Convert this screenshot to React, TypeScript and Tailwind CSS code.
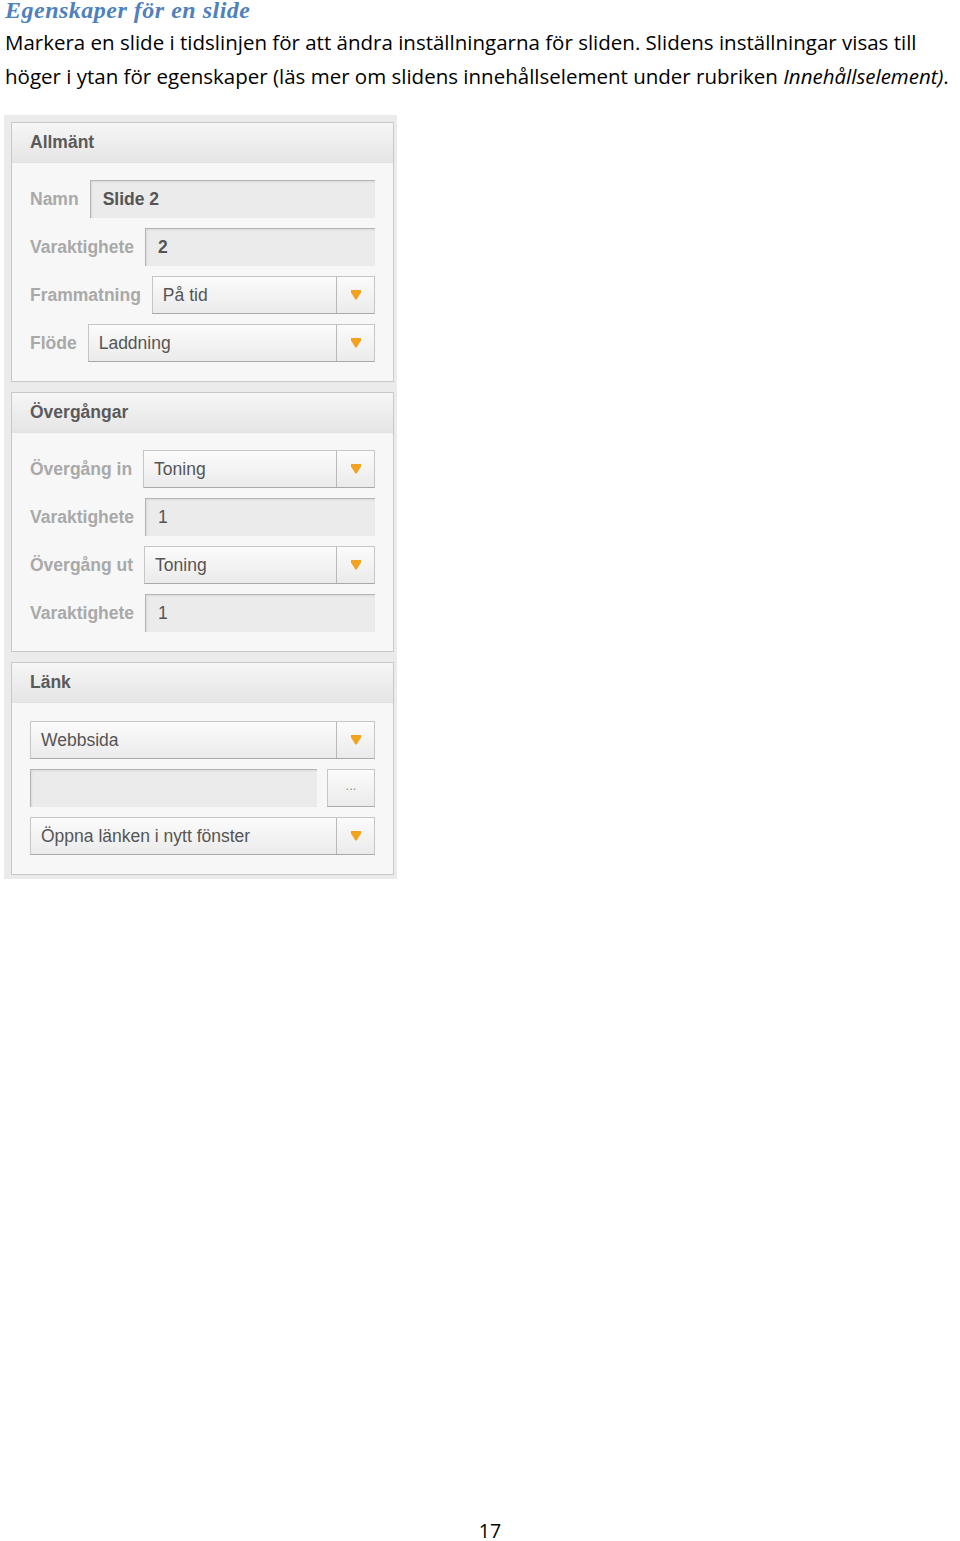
import React from 'react';

const Arrow: React.FC = () => (
  <svg width="10" height="10" viewBox="0 0 10 10">
    <polygon points="0,0 10,0 10,2.5 5.6,9.5 4.4,9.5 0,2.5" fill="#f2a21f" />
  </svg>
);

const Label: React.FC<{ text: string }> = ({ text }) => (
  <span className="shrink-0 whitespace-nowrap text-[17.5px] font-bold text-[#a9a9a9]">{text}</span>
);

const TextInput: React.FC<{ value?: string; bold?: boolean; className?: string }> = ({ value = '', bold, className = '' }) => (
  <div
    className={`flex h-[38px] items-center border-t border-l border-t-[#b4b4b4] border-l-[#b4b4b4] bg-[#ebebeb] pl-[12px] text-[17.5px] text-[#555] shadow-[inset_1px_1px_2px_rgba(0,0,0,0.08)] ${bold ? 'font-bold' : ''} ${className}`}
  >
    {value}
  </div>
);

const Select: React.FC<{ value: string; className?: string }> = ({ value, className = '' }) => (
  <div
    className={`flex h-[38px] items-stretch border border-[#c6c6c6] border-b-[#a9a9a9] bg-gradient-to-b from-[#fbfbfb] to-[#ebebeb] text-[17.5px] text-[#555] ${className}`}
  >
    <span className="flex flex-1 items-center whitespace-nowrap pl-[10px]">{value}</span>
    <span className="flex w-[38px] items-center justify-center border-l border-[#b9b9b9]">
      <Arrow />
    </span>
  </div>
);

const Section: React.FC<{ title: string; children: React.ReactNode }> = ({ title, children }) => (
  <div className="border border-[#c9c9c9] bg-[#f7f7f7]">
    <div className="flex h-[40px] items-center border-b border-[#e2e2e2] bg-gradient-to-b from-[#f6f6f6] to-[#e5e5e5] pl-[18px] text-[17.5px] font-bold text-[#5a5a5a]">
      {title}
    </div>
    {children}
  </div>
);

const Row: React.FC<{ children: React.ReactNode }> = ({ children }) => (
  <div className="flex items-center gap-[11px]">{children}</div>
);

export default function App() {
  return (
    <div className="flex h-[1541px] w-[960px] flex-col bg-white font-['Open_Sans',sans-serif]">
      <h1 className="mt-[-2px] h-[27px] pl-[5px] font-['Liberation_Serif',serif] text-[24px] font-bold italic leading-[24px] tracking-[0.5px] text-[#4f81bd]">
        Egenskaper för en slide
      </h1>
      <p className="whitespace-nowrap pl-[5px] text-[20.5px] leading-[34px] text-black">
        Markera en slide i tidslinjen för att ändra inställningarna för sliden. Slidens inställningar visas till
        <br />
        höger i ytan för egenskaper (läs mer om slidens innehållselement under rubriken <i>Innehållselement)</i>.
      </p>

      <div className="ml-[4px] mt-[22px] flex w-[393px] flex-col gap-[10px] bg-[#ebebeb] pb-[4px] pl-[7px] pr-[3px] pt-[7px] font-['Liberation_Sans',Arial,sans-serif]">
        <Section title="Allmänt">
          <div className="flex flex-col gap-[10px] px-[18px] pb-[19px] pt-[17px]">
            <Row>
              <Label text="Namn" />
              <TextInput value="Slide 2" bold className="flex-1" />
            </Row>
            <Row>
              <Label text="Varaktighete" />
              <TextInput value="2" bold className="flex-1" />
            </Row>
            <Row>
              <Label text="Frammatning" />
              <Select value="På tid" className="flex-1" />
            </Row>
            <Row>
              <Label text="Flöde" />
              <Select value="Laddning" className="flex-1" />
            </Row>
          </div>
        </Section>

        <Section title="Övergångar">
          <div className="flex flex-col gap-[10px] px-[18px] pb-[19px] pt-[17px]">
            <Row>
              <Label text="Övergång in" />
              <Select value="Toning" className="flex-1" />
            </Row>
            <Row>
              <Label text="Varaktighete" />
              <TextInput value="1" className="flex-1" />
            </Row>
            <Row>
              <Label text="Övergång ut" />
              <Select value="Toning" className="flex-1" />
            </Row>
            <Row>
              <Label text="Varaktighete" />
              <TextInput value="1" className="flex-1" />
            </Row>
          </div>
        </Section>

        <Section title="Länk">
          <div className="flex flex-col gap-[10px] px-[18px] pb-[19px] pt-[18px]">
            <Select value="Webbsida" />
            <div className="flex items-center gap-[10px]">
              <TextInput className="flex-1" />
              <div className="flex h-[38px] w-[48px] items-center justify-center border border-[#c6c6c6] border-b-[#a9a9a9] bg-gradient-to-b from-[#fbfbfb] to-[#ebebeb] pb-[4px] text-[13px] text-[#888]">
                ...
              </div>
            </div>
            <Select value="Öppna länken i nytt fönster" />
          </div>
        </Section>
      </div>

      <div className="mt-auto flex justify-center pl-[20px] text-[19.5px] leading-[20px] text-black">17</div>
    </div>
  );
}
